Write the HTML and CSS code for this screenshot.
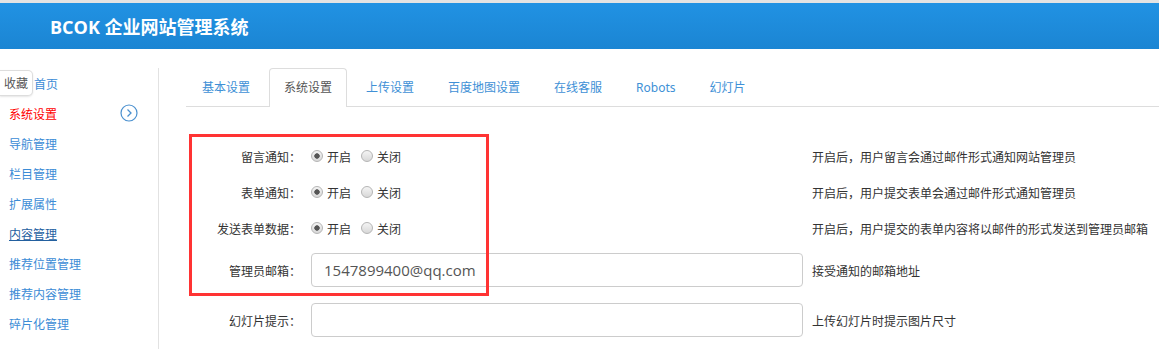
FILE: index.html
```html
<!DOCTYPE html>
<html lang="zh-CN">
<head>
  <meta charset="UTF-8" />
  <title>BCOK 企业网站管理系统</title>
  <link rel="stylesheet" href="styles.css">
</head>
<body>
  <div class="header">
    <h1>BCOK 企业网站管理系统</h1>
  </div>

  <div class="wrap">
    <div class="sidebar">
      <ul class="menu">
        <li class="home"><a href="#">首页</a></li>
        <li class="current"><a href="#">系统设置</a>
          <svg class="arrow" width="18" height="18" viewBox="0 0 18 18">
            <circle cx="9" cy="9" r="8" fill="none" stroke="#4a90cf" stroke-width="1.2"/>
            <path d="M7.5 5.5 L11 9 L7.5 12.5" fill="none" stroke="#4a90cf" stroke-width="1.3"/>
          </svg>
        </li>
        <li><a href="#">导航管理</a></li>
        <li><a href="#">栏目管理</a></li>
        <li><a href="#">扩展属性</a></li>
        <li class="visited"><a href="#">内容管理</a></li>
        <li><a href="#">推荐位置管理</a></li>
        <li><a href="#">推荐内容管理</a></li>
        <li><a href="#">碎片化管理</a></li>
      </ul>
      <span class="fav">收藏</span>
    </div>

    <div class="main">
      <ul class="tabs">
        <li><a href="#">基本设置</a></li>
        <li class="active"><a href="#">系统设置</a></li>
        <li><a href="#">上传设置</a></li>
        <li><a href="#">百度地图设置</a></li>
        <li><a href="#">在线客服</a></li>
        <li><a href="#">Robots</a></li>
        <li><a href="#">幻灯片</a></li>
      </ul>

      <div class="form">
        <div class="row">
          <label class="name">留言通知：</label>
          <div class="ctrl">
            <label class="opt"><input type="radio" name="msg" checked>开启</label>
            <label class="opt"><input type="radio" name="msg">关闭</label>
          </div>
          <span class="tip">开启后，用户留言会通过邮件形式通知网站管理员</span>
        </div>
        <div class="row">
          <label class="name">表单通知：</label>
          <div class="ctrl">
            <label class="opt"><input type="radio" name="form" checked>开启</label>
            <label class="opt"><input type="radio" name="form">关闭</label>
          </div>
          <span class="tip">开启后，用户提交表单会通过邮件形式通知管理员</span>
        </div>
        <div class="row">
          <label class="name">发送表单数据：</label>
          <div class="ctrl">
            <label class="opt"><input type="radio" name="data" checked>开启</label>
            <label class="opt"><input type="radio" name="data">关闭</label>
          </div>
          <span class="tip">开启后，用户提交的表单内容将以邮件的形式发送到管理员邮箱</span>
        </div>
        <div class="row tall">
          <label class="name">管理员邮箱：</label>
          <input type="text" class="field" value="1547899400@qq.com">
          <span class="tip">接受通知的邮箱地址</span>
        </div>
        <div class="row tall">
          <label class="name">幻灯片提示：</label>
          <input type="text" class="field" value="">
          <span class="tip">上传幻灯片时提示图片尺寸</span>
        </div>

        <div class="mark"></div>
      </div>
    </div>
  </div>
</body>
</html>
```

FILE: styles.css
```css
body {
  margin: 0;
  font-family: "Noto Sans CJK SC", "Noto Sans", sans-serif;
  font-size: 12px;
  color: #333;
  background: #fff;
}

ul {
  list-style: none;
  margin: 0;
  padding: 0;
}

a {
  text-decoration: none;
}

.header {
  border-top: 3px solid #e3e3e3;
  height: 46px;
  background: linear-gradient(#2192e3, #1b85d3);
}

.header h1 {
  margin: 0;
  padding-left: 50px;
  line-height: 48px;
  font-size: 18px;
  font-weight: bold;
  color: #fff;
  font-family: "Open Sans", "Noto Sans CJK SC", sans-serif;
}

.wrap {
  display: flex;
  padding-top: 19px;
}

.sidebar {
  position: relative;
  width: 158px;
  height: 290px;
  border-right: 1px solid #e2e2e2;
  flex-shrink: 0;
}

.menu li {
  display: flex;
  align-items: center;
  justify-content: space-between;
  height: 30px;
  padding: 0 20px 0 9px;
}

.menu .home {
  padding-left: 34px;
}

.menu a {
  color: #3b8cd6;
}

.menu .current a {
  color: #f00;
}

.menu .visited a {
  color: #23609f;
  text-decoration: underline;
}

.fav {
  position: absolute;
  left: 0;
  top: 2px;
  padding: 0 4px;
  line-height: 24px;
  background: #fff;
  border: 1px solid #ddd;
  border-left: none;
  border-radius: 0 5px 5px 0;
  box-shadow: 0 1px 2px rgba(0, 0, 0, 0.1);
  color: #555;
}

.main {
  flex: 1;
  padding-left: 27px;
}

.tabs {
  display: flex;
  border-bottom: 1px solid #ddd;
  padding-left: 1px;
}

.tabs li {
  margin-right: 4px;
  margin-bottom: -1px;
}

.tabs a {
  display: block;
  height: 37px;
  line-height: 37px;
  padding: 0 14px;
  border: 1px solid transparent;
  border-bottom: none;
  color: #4090d6;
  font-family: "Noto Sans", "Noto Sans CJK SC", sans-serif;
}

.tabs .active a {
  background: #fff;
  color: #555;
  border-color: #ddd;
  border-radius: 4px 4px 0 0;
  height: 38px;
}

.form {
  position: relative;
  padding-top: 31px;
}

.row {
  display: flex;
  align-items: center;
  height: 36px;
}

.row.tall {
  height: 50px;
}

.row:nth-child(4) {
  margin-top: -1px;
}

.name {
  width: 125px;
  text-align: right;
  padding-right: 10px;
  box-sizing: border-box;
  color: #333;
}

.ctrl {
  display: flex;
  width: 492px;
  gap: 10px;
}

.opt {
  display: flex;
  align-items: center;
  gap: 4px;
  color: #333;
}

.opt input {
  appearance: none;
  margin: 0;
  width: 12px;
  height: 12px;
  border-radius: 50%;
  border: 1px solid #b5b5b5;
  background: linear-gradient(#f4f4f4, #d8d8d8);
  box-sizing: border-box;
}

.opt input:checked {
  background: radial-gradient(circle, #555 0, #555 2.4px, transparent 3px), linear-gradient(#f4f4f4, #d8d8d8);
}

.field {
  width: 492px;
  height: 34px;
  box-sizing: border-box;
  border: 1px solid #ccc;
  border-radius: 4px;
  padding: 0 12px;
  font-family: "Open Sans", sans-serif;
  font-size: 15px;
  color: #555;
  outline: none;
}

.tip {
  margin-left: 9px;
  color: #333;
}

.mark {
  position: absolute;
  left: 3px;
  top: 27px;
  width: 294px;
  height: 156px;
  border: 3px solid #f33;
}
```
